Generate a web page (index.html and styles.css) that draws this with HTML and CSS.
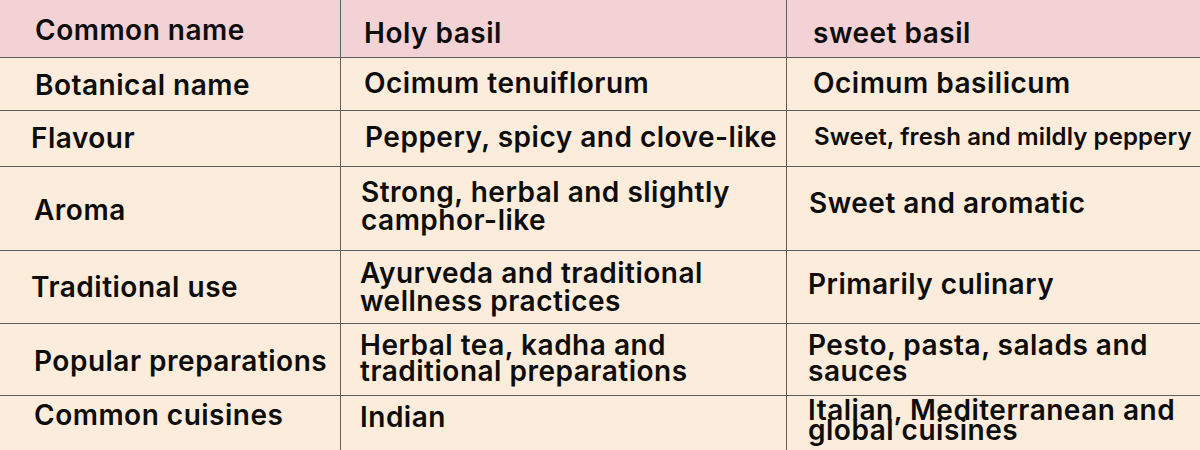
FILE: index.html
```html
<!DOCTYPE html>
<html lang="en">
<head>
<meta charset="utf-8">
<title>Holy basil vs sweet basil</title>
<link rel="stylesheet" href="styles.css">
</head>
<body>
<div class="sheet">
  <div class="cell head c1 r1"><span>Common name</span></div>
  <div class="cell head c2 r1"><span>Holy basil</span></div>
  <div class="cell head c3 r1"><span>sweet basil</span></div>

  <div class="cell c1 r2"><span>Botanical name</span></div>
  <div class="cell c2 r2"><span>Ocimum tenuiflorum</span></div>
  <div class="cell c3 r2"><span>Ocimum basilicum</span></div>

  <div class="cell c1 r3"><span>Flavour</span></div>
  <div class="cell c2 r3"><span>Peppery, spicy and clove-like</span></div>
  <div class="cell c3 r3 small"><span>Sweet, fresh and mildly peppery</span></div>

  <div class="cell c1 r4"><span>Aroma</span></div>
  <div class="cell c2 r4"><span>Strong, herbal and slightly<br>camphor-like</span></div>
  <div class="cell c3 r4"><span>Sweet and aromatic</span></div>

  <div class="cell c1 r5"><span>Traditional use</span></div>
  <div class="cell c2 r5"><span>Ayurveda and traditional<br>wellness practices</span></div>
  <div class="cell c3 r5"><span>Primarily culinary</span></div>

  <div class="cell c1 r6"><span>Popular preparations</span></div>
  <div class="cell c2 r6 tight"><span>Herbal tea, kadha and<br>traditional preparations</span></div>
  <div class="cell c3 r6 tight"><span>Pesto, pasta, salads and<br>sauces</span></div>

  <div class="cell c1 r7 last"><span>Common cuisines</span></div>
  <div class="cell c2 r7 last"><span>Indian</span></div>
  <div class="cell c3 r7 last tighter"><span>Italian, Mediterranean and<br>global cuisines</span></div>
</div>
</body>
</html>
```

FILE: styles.css
```css
html, body {
  margin: 0;
  padding: 0;
  width: 1200px;
  height: 450px;
  overflow: hidden;
  background: #fcecdb;
}

.sheet {
  display: grid;
  grid-template-columns: 341px 446px 413px;
  grid-template-rows: 58px 53px 56px 84px 73px 72px 70px;
  width: 1200px;
  font-family: "Inter", "Noto Sans", sans-serif;
  font-weight: 600;
  font-size: 28px;
  line-height: 28px;
  letter-spacing: 0.5px;
  color: #0d0d0d;
}

.cell {
  box-sizing: border-box;
  background: #fcecdb;
  border-bottom: 1px solid #5e5e5e;
  border-right: 1px solid #5e5e5e;
  white-space: nowrap;
}

.cell.c3 { border-right: none; }
.cell.last { border-bottom: none; }
.cell.head { background: #f2d2d4; }

.cell.small { font-size: 24px; letter-spacing: 0.1px; }
.cell.tight { line-height: 26px; }
.cell.tighter { line-height: 20px; }

/* row 1 */
.c1.r1 { padding: 16px 0 0 35px; }
.c2.r1 { padding: 19px 0 0 23px; }
.c3.r1 { padding: 19px 0 0 26px; }
/* row 2 */
.c1.r2 { padding: 13px 0 0 35px; }
.c2.r2 { padding: 11px 0 0 23px; }
.c3.r2 { padding: 11px 0 0 26px; }
/* row 3 */
.c1.r3 { padding: 13px 0 0 31px; }
.c2.r3 { padding: 12px 0 0 24px; }
.c3.r3 { padding: 12px 0 0 27px; }
/* row 4 */
.c1.r4 { padding: 29px 0 0 34px; }
.c2.r4 { padding: 11px 0 0 20px; }
.c3.r4 { padding: 22px 0 0 22px; }
/* row 5 */
.c1.r5 { padding: 22px 0 0 31px; }
.c2.r5 { padding: 8px 0 0 19px; }
.c3.r5 { padding: 19px 0 0 21px; }
/* row 6 */
.c1.r6 { padding: 23px 0 0 34px; }
.c2.r6 { padding: 8px 0 0 19px; }
.c3.r6 { padding: 8px 0 0 21px; }
/* row 7 */
.c1.r7 { padding: 5px 0 0 34px; }
.c2.r7 { padding: 7px 0 0 19px; }
.c3.r7 { padding: 4px 0 0 21px; }
```
